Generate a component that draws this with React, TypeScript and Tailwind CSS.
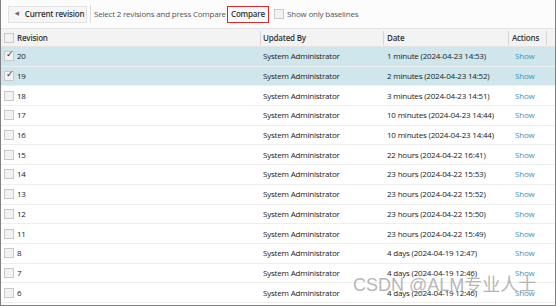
const rows: [string, string, boolean][] = [
  ["20", "1 minute (2024-04-23 14:53)", true],
  ["19", "2 minutes (2024-04-23 14:52)", true],
  ["18", "3 minutes (2024-04-23 14:51)", false],
  ["17", "10 minutes (2024-04-23 14:44)", false],
  ["16", "10 minutes (2024-04-23 14:44)", false],
  ["15", "22 hours (2024-04-22 16:41)", false],
  ["14", "23 hours (2024-04-22 15:53)", false],
  ["13", "23 hours (2024-04-22 15:52)", false],
  ["12", "23 hours (2024-04-22 15:50)", false],
  ["11", "23 hours (2024-04-22 15:49)", false],
  ["8", "4 days (2024-04-19 12:47)", false],
  ["7", "4 days (2024-04-19 12:46)", false],
  ["6", "4 days (2024-04-19 12:46)", false],
];

function Box({ checked }: { checked?: boolean }) {
  return (
    <span className="relative grid size-[10px] shrink-0 place-items-center border border-[#c9c9c9] bg-[#f2f2f2]">
      {checked && <span className="absolute -top-[3px] left-[1px] text-[9px] leading-none text-[#333]">✓</span>}
    </span>
  );
}

export default function App() {
  return (
    <div
      className="relative h-[306px] w-[556px] overflow-hidden whitespace-nowrap border-x border-b border-[#808080] bg-white text-[8px] tracking-[-0.2px] text-[#222]"
      style={{ fontFamily: '"Open Sans", "Noto Sans", sans-serif' }}
    >
      <div className="flex h-[29px] items-center border-b border-[#e4e4e4] bg-[#fcfcfc] pl-[7px]">
        <button className="flex h-[17px] w-[79px] items-center gap-[6px] border border-[#e2e2e2] bg-[#f6f6f6] pl-[6px] font-semibold tracking-[-0.2px] text-[#333]">
          <span className="text-[5px] text-[#666]">◀</span>
          Current revision
        </button>
        <span className="ml-[3px] h-[18px] w-px bg-[#dcdcdc]" />
        <span className="ml-[3px] w-[133px] text-[#555]">Select 2 revisions and press Compare</span>
        <button className="flex h-[17px] w-[42px] items-center justify-center border border-[#e0262b] font-semibold tracking-[-0.2px] text-[#333]">
          Compare
        </button>
        <span className="ml-[5px] flex items-center gap-[3px] text-[#555]">
          <Box />
          Show only baselines
        </span>
      </div>

      <div className="flex h-[18px] items-center border-b border-[#e4e4e4] bg-[#f3f3f3] font-semibold text-[#333]">
        <div className="flex w-[259px] items-center gap-[3px] pl-[3px]">
          <Box />
          Revision
        </div>
        <div className="h-[14px] w-px bg-[#d6d6d6]" />
        <div className="w-[122px] pl-[2px]">Updated By</div>
        <div className="h-[14px] w-px bg-[#d6d6d6]" />
        <div className="w-[124px] pl-[3px]">Date</div>
        <div className="h-[14px] w-px bg-[#d6d6d6]" />
        <div className="w-[37px] pl-[3px]">Actions</div>
        <div className="h-[14px] w-px bg-[#d6d6d6]" />
      </div>

      {rows.map(([rev, date, sel]) => (
        <div
          key={rev + date}
          className={`flex h-[19.7px] items-center border-b border-[#eeeeee] ${sel ? "bg-[#cfe7ec]" : "bg-white"}`}
        >
          <div className="flex w-[260px] items-center gap-[3px] pl-[3px]">
            <Box checked={sel} />
            {rev}
          </div>
          <div className="w-[123px] pl-[2px]">System Administrator</div>
          <div className="w-[125px] pl-[3px]">{date}</div>
          <div className="pl-[6px] text-[#3d93b8]">Show</div>
        </div>
      ))}

      <div
        className="absolute left-[352px] top-[276px] text-[18px] leading-none tracking-normal text-[#9a9a9a] opacity-70"
        style={{ fontFamily: '"Liberation Sans", "Noto Sans CJK SC", sans-serif' }}
      >
        CSDN @ALM专业人士
      </div>
    </div>
  );
}
